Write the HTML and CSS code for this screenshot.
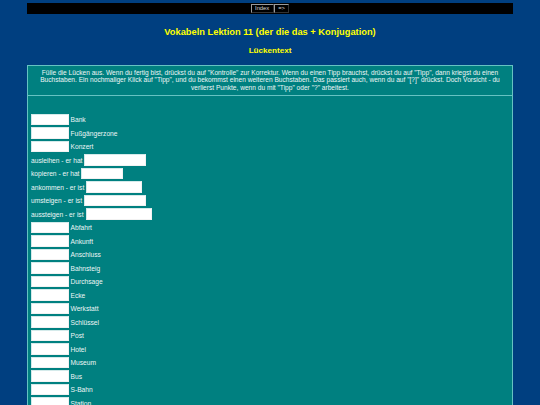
FILE: index.html
```html
<!DOCTYPE html>
<html lang="de">
<head>
<meta charset="utf-8">
<title>Vokabeln Lektion 11</title>
<link rel="stylesheet" href="styles.css">
</head>
<body>
<div class="page">
  <div class="navbar">
    <button class="navbtn">Index</button><button class="navbtn">=&gt;</button>
  </div>
  <h2 class="title">Vokabeln Lektion 11 (der die das + Konjugation)</h2>
  <h3 class="subtitle">Lückentext</h3>
  <div class="instructions">Fülle die Lücken aus. Wenn du fertig bist, drückst du auf "Kontrolle" zur Korrektur. Wenn du einen Tipp brauchst, drückst du auf "Tipp", dann kriegst du einen Buchstaben. Ein nochmaliger Klick auf "Tipp", und du bekommst einen weiteren Buchstaben. Das passiert auch, wenn du auf "[?]" drückst. Doch Vorsicht - du verlierst Punkte, wenn du mit "Tipp" oder "?" arbeitest.</div>
  <div class="cloze">
    <div class="row"><input class="gap" type="text"><span>Bank</span></div>
    <div class="row"><input class="gap" type="text"><span>Fußgängerzone</span></div>
    <div class="row"><input class="gap" type="text"><span>Konzert</span></div>
    <div class="row verb"><span>ausleihen - er hat</span><input class="gap w61" type="text"></div>
    <div class="row verb"><span>kopieren - er hat</span><input class="gap w42" type="text"></div>
    <div class="row verb"><span>ankommen - er ist</span><input class="gap w56" type="text"></div>
    <div class="row verb"><span>umsteigen - er ist</span><input class="gap w61" type="text"></div>
    <div class="row verb"><span>aussteigen - er ist</span><input class="gap w66" type="text"></div>
    <div class="row"><input class="gap" type="text"><span>Abfahrt</span></div>
    <div class="row"><input class="gap" type="text"><span>Ankunft</span></div>
    <div class="row"><input class="gap" type="text"><span>Anschluss</span></div>
    <div class="row"><input class="gap" type="text"><span>Bahnsteig</span></div>
    <div class="row"><input class="gap" type="text"><span>Durchsage</span></div>
    <div class="row"><input class="gap" type="text"><span>Ecke</span></div>
    <div class="row"><input class="gap" type="text"><span>Werkstatt</span></div>
    <div class="row"><input class="gap" type="text"><span>Schlüssel</span></div>
    <div class="row"><input class="gap" type="text"><span>Post</span></div>
    <div class="row"><input class="gap" type="text"><span>Hotel</span></div>
    <div class="row"><input class="gap" type="text"><span>Museum</span></div>
    <div class="row"><input class="gap" type="text"><span>Bus</span></div>
    <div class="row"><input class="gap" type="text"><span>S-Bahn</span></div>
    <div class="row"><input class="gap" type="text"><span>Station</span></div>
  </div>
</div>
</body>
</html>
```
FILE: styles.css
```css
html, body {
  margin: 0;
  padding: 0;
  background: #003f80;
  font-family: "Liberation Sans", Arial, sans-serif;
  color: #eef6f6;
}

.page {
  width: 486px;
  margin: 0 auto;
  padding-top: 3px;
}

.navbar {
  background: #000;
  height: 10.5px;
  display: flex;
  justify-content: center;
  align-items: center;
}

.navbtn {
  font-family: "Liberation Sans", Arial, sans-serif;
  font-size: 5.8px;
  line-height: 7px;
  height: 9px;
  padding: 0 3.5px;
  margin: 0;
  background: #000;
  color: #d8d8d8;
  border: 1px solid;
  border-color: #9a9a9a #333 #333 #9a9a9a;
}

.title {
  margin: 0;
  padding-top: 12px;
  text-align: center;
  font-size: 9.3px;
  line-height: 12px;
  font-weight: bold;
  color: #ffff00;
}

.subtitle {
  margin: 0;
  padding-top: 8px;
  text-align: center;
  font-size: 8.1px;
  line-height: 10px;
  font-weight: bold;
  color: #ffff00;
}

.instructions {
  margin-top: 9px;
  background: #008080;
  border: 1px solid #66c2c2;
  padding: 3px 6px 3.5px;
  text-align: center;
  font-size: 6.6px;
  line-height: 7.8px;
}

.cloze {
  background: #008080;
  border: 1px solid #66c2c2;
  border-top: 0;
  padding: 16.5px 3px 20px;
  font-size: 6.66px;
}

.row {
  height: 13.5px;
  display: flex;
  align-items: center;
  gap: 2px;
}

.gap {
  box-sizing: border-box;
  width: 37.5px;
  height: 11.5px;
  margin: 0;
  padding: 0;
  background: #fff;
  border: 1px solid #d4eaea;
  border-right-color: #f2f2f2;
  border-bottom-color: #f2f2f2;
}

.w42 { width: 42px; }
.w56 { width: 56px; }
.w61 { width: 61.5px; }
.w66 { width: 66px; }
```
